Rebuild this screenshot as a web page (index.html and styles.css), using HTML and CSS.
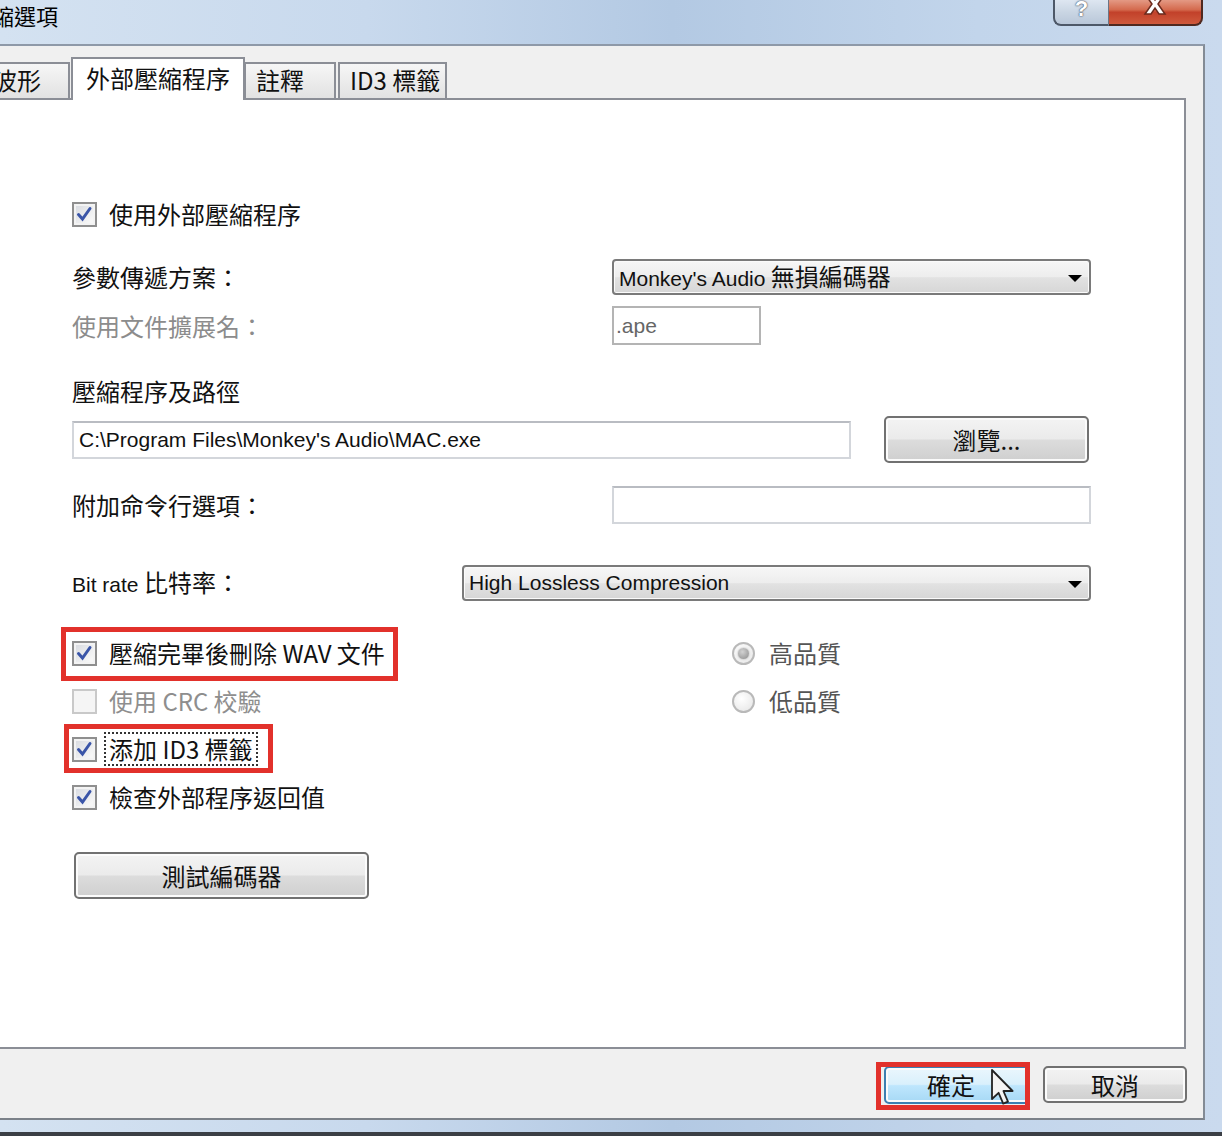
FILE: index.html
```html
<!DOCTYPE html>
<html lang="zh-Hant">
  <head>
    <meta charset="UTF-8" />
    <meta name="viewport" content="width=device-width, initial-scale=1.0" />
    <link rel="stylesheet" href="styles.css">
    <title>壓縮選項</title>
  </head>
  <body>
    <div class="window">
      <div class="titlebar">
        <div class="title">壓縮選項</div>
        <div class="caption-buttons">
          <div class="cap-btn cap-help">?</div>
          <div class="cap-btn cap-close">
            <svg width="26" height="20" viewBox="0 0 26 20">
              <path d="M3 -4 L10 6 L3 16 L9 16 L13 10 L17 16 L23 16 L16 6 L23 -4 L17 -4 L13 2 L9 -4 Z" fill="#fff" stroke="#6b2a1d" stroke-width="1.5" />
            </svg>
          </div>
        </div>
      </div>

      <div class="dialog">
        <div class="tabs">
          <div class="tab tab-first">波形</div>
          <div class="tab tab-active">外部壓縮程序</div>
          <div class="tab tab-notes">註釋</div>
          <div class="tab tab-id3">ID3 標籤</div>
        </div>

        <div class="panel">
          <div class="row row-top">
            <label class="check">
              <span class="box checked"><svg viewBox="0 0 21 21"><path d="M4.5 10.5 L8.5 15 L16 4.5" /></svg></span>
              <span class="text">使用外部壓縮程序</span>
            </label>
          </div>

          <div class="field field-param">
            <span class="label">參數傳遞方案：</span>
            <div class="combo"><span><span class="en">Monkey's Audio</span> 無損編碼器</span><span class="arrow"></span></div>
          </div>

          <div class="field field-ext">
            <span class="label disabled">使用文件擴展名：</span>
            <div class="textbox textbox-ext"><span class="en">.ape</span></div>
          </div>

          <div class="section-label">壓縮程序及路徑</div>

          <div class="path-row">
            <div class="textbox textbox-path"><span class="en">C:\Program Files\Monkey's Audio\MAC.exe</span></div>
            <button type="button" class="btn btn-browse">瀏覽...</button>
          </div>

          <div class="field field-extra">
            <span class="label">附加命令行選項：</span>
            <div class="textbox textbox-extra"></div>
          </div>

          <div class="field field-bitrate">
            <span class="label"><span class="en">Bit rate</span> 比特率：</span>
            <div class="combo combo-wide"><span class="en">High Lossless Compression</span><span class="arrow"></span></div>
          </div>

          <div class="options">
            <label class="check opt-left mark mark-wav">
              <span class="box checked"><svg viewBox="0 0 21 21"><path d="M4.5 10.5 L8.5 15 L16 4.5" /></svg></span>
              <span class="text">壓縮完畢後刪除 WAV 文件</span>
            </label>
            <label class="radio opt-right">
              <span class="circle checked"></span>
              <span class="text">高品質</span>
            </label>
            <label class="check opt-left disabled">
              <span class="box"></span>
              <span class="text">使用 CRC 校驗</span>
            </label>
            <label class="radio opt-right">
              <span class="circle"></span>
              <span class="text">低品質</span>
            </label>
            <label class="check opt-left mark mark-id3">
              <span class="box checked"><svg viewBox="0 0 21 21"><path d="M4.5 10.5 L8.5 15 L16 4.5" /></svg></span>
              <span class="text focus">添加 ID3 標籤</span>
            </label>
            <label class="check opt-left">
              <span class="box checked"><svg viewBox="0 0 21 21"><path d="M4.5 10.5 L8.5 15 L16 4.5" /></svg></span>
              <span class="text">檢查外部程序返回值</span>
            </label>
          </div>

          <button type="button" class="btn btn-test">測試編碼器</button>
        </div>

        <div class="footer">
          <div class="ok-wrap">
            <button type="button" class="btn btn-ok">確定</button>
            <svg class="cursor" width="26" height="38" viewBox="0 0 13 19">
              <path d="M1 1 L1 15.5 L4.3 12.4 L6.6 17.8 L9 16.8 L6.7 11.5 L11.3 11.5 Z" fill="#f4f4f4" stroke="#222" stroke-width="0.9" stroke-linejoin="round" />
            </svg>
          </div>
          <button type="button" class="btn btn-cancel">取消</button>
        </div>
      </div>
    </div>
  </body>
</html>
```

FILE: styles.css
```css
*,
*::before,
*::after {
  box-sizing: border-box;
}
body {
  margin: 0;
  width: 1222px;
  height: 1136px;
  overflow: hidden;
  background: #c3d4ea;
  font-family: "Noto Sans CJK TC", "Liberation Sans", sans-serif;
  color: #111;
}
.en {
  font-family: "Liberation Sans", "Noto Sans CJK TC", sans-serif;
  font-size: 21px;
}
.window {
  height: 1136px;
  display: flex;
  flex-direction: column;
  background: linear-gradient(90deg, #d4e2f1 0%, #c8d9ed 30%, #b3c9e3 55%, #c2d5eb 80%, #cadaee 100%);
  border-bottom: 4px solid #3b3f45;
}

/* title bar */
.titlebar {
  height: 44px;
  flex-shrink: 0;
  display: flex;
  justify-content: space-between;
  align-items: flex-start;
}
.title {
  font-size: 22px;
  line-height: 28px;
  margin: 1px 0 0 -30px;
  color: #000;
}
.caption-buttons {
  display: flex;
  margin-right: 19px;
  margin-top: -2px;
}
.cap-btn {
  height: 28px;
  border: 2px solid #4d5868;
  border-top: none;
  display: flex;
  justify-content: center;
  align-items: flex-end;
  overflow: hidden;
}
.cap-help {
  width: 56px;
  border-right: 1px solid #6a7585;
  border-radius: 0 0 0 8px;
  background: linear-gradient(#e1e9f3, #c9d5e3 55%, #b9c7d9);
  color: #fff;
  font: bold 22px/22px "Liberation Sans", sans-serif;
  text-shadow: 0 0 2px #3c4656, 0 0 1px #3c4656;
  padding-bottom: 4px;
}
.cap-close {
  width: 94px;
  border-left: none;
  border-radius: 0 0 8px 0;
  border-color: #4f2920;
  background: linear-gradient(#e7a38f, #d46a4e 45%, #c2412a 55%, #cf5a3d);
  padding-bottom: 6px;
}

/* dialog body */
.dialog {
  flex: 1;
  display: flex;
  flex-direction: column;
  background: #f0f0f0;
  border-top: 2px solid #8e99a8;
  border-right: 2px solid #838b95;
  border-bottom: 2px solid #7b8189;
  margin: 0 17px 12px 0;
}

/* tabs */
.tabs {
  display: flex;
  align-items: flex-end;
  height: 43px;
  margin-top: 11px;
  margin-bottom: -2px;
  position: relative;
  z-index: 1;
  font-size: 24px;
}
.tab {
  height: 36px;
  margin-bottom: 2px;
  border: 2px solid #8b8e96;
  border-bottom: none;
  background: linear-gradient(#f6f6f6, #ececec 50%, #e2e2e2);
  padding-left: 10px;
  line-height: 32px;
  white-space: nowrap;
}
.tab-first {
  width: 90px;
  margin-left: -20px;
  padding-left: 11px;
}
.tab-active {
  width: 174px;
  height: 43px;
  margin-bottom: 0;
  margin-left: 1px;
  background: #fff;
  padding-left: 13px;
  line-height: 38px;
}
.tab-notes {
  width: 92px;
  margin-left: -1px;
}
.tab-id3 {
  width: 109px;
  margin-left: 2px;
}

/* panel */
.panel {
  flex: 1;
  background: #fff;
  border: 2px solid #8b8e96;
  border-left: none;
  margin-right: 17px;
  padding: 99px 93px 0 72px;
  font-size: 24px;
  line-height: 30px;
}
.row-top {
  height: 30px;
}
.check,
.radio {
  display: flex;
  align-items: center;
  height: 30px;
  position: relative;
}
.box {
  width: 25px;
  height: 25px;
  border: 2px solid #8f8f8f;
  background: linear-gradient(135deg, #d6d9df, #f6f6f6 80%);
  box-shadow: inset 0 0 0 2px #f3f3f3;
  margin-right: 12px;
  flex-shrink: 0;
}
.box svg {
  display: block;
  width: 21px;
  height: 21px;
}
.box svg path {
  fill: none;
  stroke: #3a55a8;
  stroke-width: 3;
  stroke-linecap: round;
}
.check.disabled .box {
  border-color: #c9c9c9;
  background: #f5f5f5;
  box-shadow: none;
}
.check.disabled .text {
  color: #8e8e8e;
}

.field {
  display: grid;
  align-items: center;
}
.field-param {
  grid-template-columns: 540px 479px;
  height: 36px;
  margin-top: 30px;
}
.field-ext {
  grid-template-columns: 540px 149px;
  height: 39px;
  margin-top: 11px;
}
.field-extra {
  grid-template-columns: 540px 479px;
  height: 38px;
  margin-top: 23px;
}
.field-bitrate {
  grid-template-columns: 390px 629px;
  height: 36px;
  margin-top: 41px;
}
.label.disabled {
  color: #8c8c8c;
}
.section-label {
  margin-top: 31px;
  height: 30px;
}

.combo {
  height: 36px;
  border: 2px solid #7a7a7a;
  border-radius: 4px;
  background: linear-gradient(#f7f7f7, #ededed 50%, #e2e2e2 52%, #d6d6d6);
  box-shadow: inset 0 0 0 1px #fbfbfb;
  display: flex;
  align-items: center;
  justify-content: space-between;
  padding: 0 7px 0 5px;
  white-space: nowrap;
}
.arrow {
  width: 0;
  height: 0;
  border-left: 7px solid transparent;
  border-right: 7px solid transparent;
  border-top: 7px solid #000;
  margin-top: 2px;
}

.textbox {
  background: #fff;
  border: 2px solid #d3d6db;
  border-top-color: #b9bcc2;
  padding-left: 5px;
  display: flex;
  align-items: center;
  white-space: nowrap;
}
.textbox-ext {
  height: 39px;
  border-color: #b4b4b4;
  color: #666;
  padding-left: 2px;
}
.textbox-extra {
  height: 38px;
}
.textbox-path {
  width: 779px;
  height: 38px;
}
.path-row {
  display: flex;
  align-items: center;
  gap: 33px;
  height: 47px;
  margin-top: 10px;
}

.btn {
  font: inherit;
  color: #111;
  border: 2px solid #717171;
  border-radius: 5px;
  background: linear-gradient(#f3f3f3, #ebebeb 48%, #dcdcdc 52%, #cfcfcf);
  box-shadow: inset 0 0 0 2px #fbfbfb;
  padding: 0;
  cursor: default;
}
.btn-browse {
  width: 205px;
  height: 47px;
}
.btn-test {
  width: 295px;
  height: 47px;
  margin: 31px 0 0 2px;
  display: block;
}

/* options block */
.options {
  display: grid;
  grid-template-columns: 660px auto;
  grid-auto-rows: 48px;
  align-items: center;
  margin-top: 28px;
}
.opt-left {
  grid-column: 1;
}
.opt-right {
  grid-column: 2;
}
.radio .text {
  color: #555;
}
.circle {
  width: 23px;
  height: 23px;
  border-radius: 50%;
  border: 2px solid #b9b9b9;
  background: radial-gradient(circle at 40% 35%, #ffffff, #e4e4e4);
  margin-right: 14px;
  display: flex;
  justify-content: center;
  align-items: center;
}
.circle.checked::before {
  content: "";
  width: 11px;
  height: 11px;
  border-radius: 50%;
  background: radial-gradient(circle at 40% 35%, #d2d2d2, #8c8c8c);
  box-shadow: 0 0 2px #9a9a9a;
}
.focus {
  outline: 2px dotted #333;
  outline-offset: 0;
  padding: 0 3px;
  margin-left: -3px;
}

/* red annotation boxes */
.mark::after {
  content: "";
  position: absolute;
  border: 5px solid #e2312b;
  pointer-events: none;
}
.mark-wav::after {
  left: -11px;
  top: -11px;
  width: 337px;
  height: 54px;
}
.mark-id3::after {
  left: -8px;
  top: -10px;
  width: 209px;
  height: 49px;
}

/* footer */
.footer {
  height: 69px;
  flex-shrink: 0;
  display: flex;
  justify-content: flex-end;
  align-items: flex-start;
  gap: 13px;
  padding: 17px 16px 0 0;
  font-size: 24px;
}
.ok-wrap {
  position: relative;
}
.ok-wrap::after {
  content: "";
  position: absolute;
  left: -8px;
  top: -4px;
  width: 154px;
  height: 48px;
  border: 5px solid #e2312b;
}
.btn-ok {
  width: 146px;
  height: 38px;
  line-height: 32px;
  border-color: #3c7fb1;
  background: linear-gradient(#eaf6fd, #d9f0fc 48%, #bee6fd 52%, #a7d9f5);
  padding-right: 12px;
}
.btn-cancel {
  width: 144px;
  height: 37px;
  line-height: 31px;
}
.cursor {
  position: absolute;
  left: 106px;
  top: 2px;
  z-index: 2;
}
```
